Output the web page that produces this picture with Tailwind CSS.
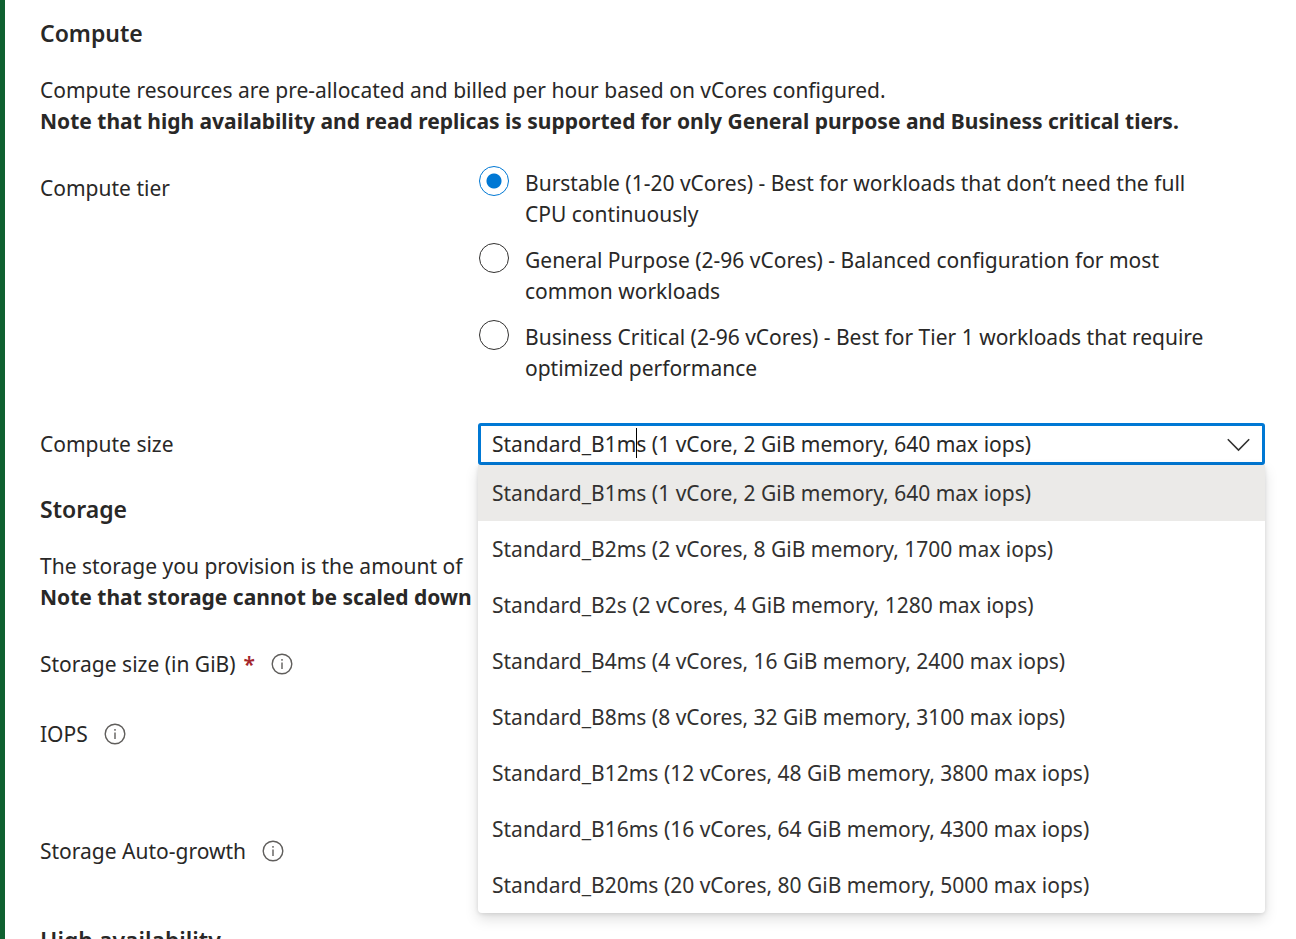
<!DOCTYPE html>
<html lang="en">
<head>
  <meta charset="UTF-8">
  <meta name="viewport" content="width=device-width, initial-scale=1.0">
  <title>Compute + storage</title>
  <script src="https://cdn.jsdelivr.net/npm/@tailwindcss/browser@4"></script>
</head>

<body class="h-screen overflow-hidden bg-white font-['Noto_Sans',sans-serif] text-[21px] leading-[31px] text-[#292827]">

<main class="min-h-screen border-l-5 border-[#0f6130] pl-[35px] pr-[31px] pt-[17px]">

  <!-- Compute -->
  <section>
    <h2 class="text-[23px] leading-8 font-semibold">Compute</h2>
    <p class="mt-[26px]">Compute resources are pre-allocated and billed per hour based on vCores configured.<br>
      <strong>Note that high availability and read replicas is supported for only General purpose and Business critical tiers.</strong></p>

    <fieldset class="mt-[29px] flex" aria-labelledby="tier-label">
      <div id="tier-label" class="w-[439px] shrink-0 pt-[7px]">Compute tier</div>
      <div class="flex flex-1 flex-col gap-[15px] pr-10">
        <div class="flex gap-4">
          <input type="radio" id="burstable" name="tier" checked class="size-[30px] shrink-0 appearance-none rounded-full border border-[#323130] checked:border-[#0078d4] checked:bg-[radial-gradient(circle,#0078d4_7px,transparent_8px)]">
          <label for="burstable" class="pt-[2px] -mb-[2px]">Burstable (1-20 vCores) - Best for workloads that don’t need the full CPU continuously</label>
        </div>
        <div class="flex gap-4">
          <input type="radio" id="general" name="tier" class="size-[30px] shrink-0 appearance-none rounded-full border border-[#323130] checked:border-[#0078d4] checked:bg-[radial-gradient(circle,#0078d4_7px,transparent_8px)]">
          <label for="general" class="pt-[2px] -mb-[2px]">General Purpose (2-96 vCores) - Balanced configuration for most common workloads</label>
        </div>
        <div class="flex gap-4">
          <input type="radio" id="critical" name="tier" class="size-[30px] shrink-0 appearance-none rounded-full border border-[#323130] checked:border-[#0078d4] checked:bg-[radial-gradient(circle,#0078d4_7px,transparent_8px)]">
          <label for="critical" class="pt-[2px] -mb-[2px]">Business Critical (2-96 vCores) - Best for Tier 1 workloads that require optimized performance</label>
        </div>
      </div>
    </fieldset>

    <div class="mt-[41px] flex items-center">
      <label for="size" class="w-[438px] shrink-0 pt-px">Compute size</label>
      <div class="relative flex-1">
        <input type="text" id="size" role="combobox" aria-expanded="true" aria-controls="size-list" value="Standard_B1ms (1 vCore, 2 GiB memory, 640 max iops)" class="block h-[42px] w-full rounded-[3px] border-3 border-[#0078d4] bg-white pl-[11px] pr-12 outline-none">
        <span class="absolute left-[158px] top-[5px] h-[30px] w-px bg-black"></span>
        <button type="button" aria-label="Toggle sizes" class="absolute right-[14px] top-[9px]">
          <svg class="h-6 w-6" viewBox="0 0 24 24" fill="none" stroke="#323130" stroke-width="1.6"><path d="M.8 7.300 11.500 18 22.200 7.300"/></svg>
        </button>

        <!-- Size options -->
        <ul id="size-list" role="listbox" class="absolute inset-x-0 top-full z-10 rounded-b-[4px] bg-white text-[#323130] shadow-[0_6px_14px_rgba(0,0,0,0.13),0_1px_4px_rgba(0,0,0,0.11)]">
          <li role="option" aria-selected="true" class="flex h-14 items-center bg-[#ebeae8] px-[14px] pt-px">Standard_B1ms (1 vCore, 2 GiB memory, 640 max iops)</li>
          <li role="option" class="flex h-14 items-center px-[14px] pt-px">Standard_B2ms (2 vCores, 8 GiB memory, 1700 max iops)</li>
          <li role="option" class="flex h-14 items-center px-[14px] pt-px">Standard_B2s (2 vCores, 4 GiB memory, 1280 max iops)</li>
          <li role="option" class="flex h-14 items-center px-[14px] pt-px">Standard_B4ms (4 vCores, 16 GiB memory, 2400 max iops)</li>
          <li role="option" class="flex h-14 items-center px-[14px] pt-px">Standard_B8ms (8 vCores, 32 GiB memory, 3100 max iops)</li>
          <li role="option" class="flex h-14 items-center px-[14px] pt-px">Standard_B12ms (12 vCores, 48 GiB memory, 3800 max iops)</li>
          <li role="option" class="flex h-14 items-center px-[14px] pt-px">Standard_B16ms (16 vCores, 64 GiB memory, 4300 max iops)</li>
          <li role="option" class="flex h-14 items-center px-[14px] pt-px">Standard_B20ms (20 vCores, 80 GiB memory, 5000 max iops)</li>
        </ul>
      </div>
    </div>
  </section>

  <!-- Storage -->
  <section class="mt-7">
    <h2 class="text-[23px] leading-8 font-semibold">Storage</h2>
    <p class="mt-[26px] whitespace-nowrap">The storage you provision is the amount of<br>
      <strong>Note that storage cannot be scaled down</strong></p>

    <div class="mt-9 flex items-center">
      <span>Storage size (in GiB)</span>
      <span class="ml-2 font-semibold text-[#a4262c]">*</span>
      <button type="button" aria-label="About storage size" class="ml-4 pb-[2px]">
        <svg class="size-[22px]" viewBox="0 0 22 22" fill="none" stroke="#605e5c" stroke-width="1.4"><circle cx="11" cy="11" r="9.800"/><path d="M11 9.500v6.500M11 6v1.800"/></svg>
      </button>
    </div>
    <div class="mt-[39px] flex items-center">
      <span>IOPS</span>
      <button type="button" aria-label="About IOPS" class="ml-4 pb-[2px]">
        <svg class="size-[22px]" viewBox="0 0 22 22" fill="none" stroke="#605e5c" stroke-width="1.4"><circle cx="11" cy="11" r="9.800"/><path d="M11 9.500v6.500M11 6v1.800"/></svg>
      </button>
    </div>
    <div class="mt-[86px] flex items-center">
      <span>Storage Auto-growth</span>
      <button type="button" aria-label="About storage auto-growth" class="ml-4 pb-[2px]">
        <svg class="size-[22px]" viewBox="0 0 22 22" fill="none" stroke="#605e5c" stroke-width="1.4"><circle cx="11" cy="11" r="9.800"/><path d="M11 9.500v6.500M11 6v1.800"/></svg>
      </button>
    </div>
  </section>

  <section class="mt-[57px]">
    <h2 class="text-[23px] leading-8 font-semibold">High availability</h2>
  </section>

</main>

</body>
</html>
